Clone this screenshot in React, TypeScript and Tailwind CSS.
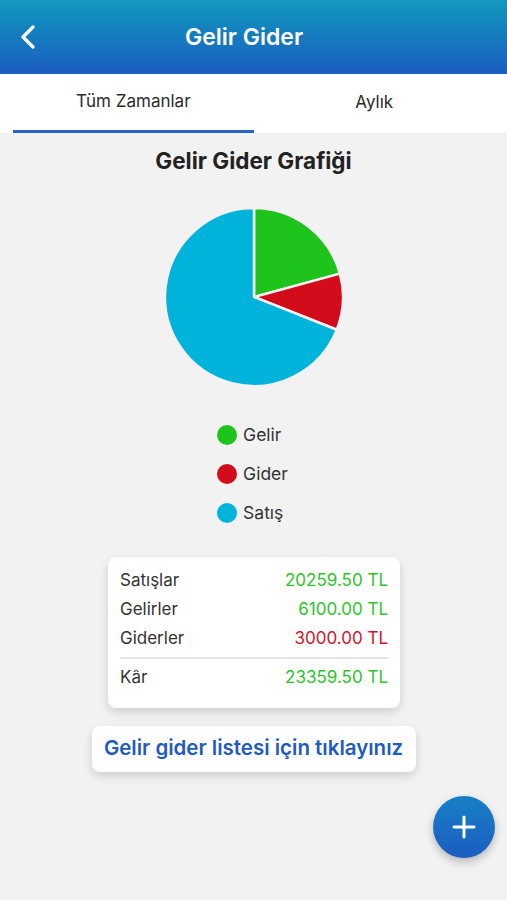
import React from "react";

function Pie() {
  const cx = 90, cy = 90, r = 89;
  const pt = (deg: number) => {
    const a = (deg * Math.PI) / 180;
    return [cx + r * Math.sin(a), cy - r * Math.cos(a)];
  };
  const total = 6100 + 3000 + 20259.5;
  const g = (6100 / total) * 360;
  const rd = g + (3000 / total) * 360;
  const slice = (a0: number, a1: number) => {
    const [x0, y0] = pt(a0);
    const [x1, y1] = pt(a1);
    const large = a1 - a0 > 180 ? 1 : 0;
    return `M${cx},${cy} L${x0},${y0} A${r},${r} 0 ${large} 1 ${x1},${y1} Z`;
  };
  return (
    <svg width="180" height="180" viewBox="0 0 180 180">
      <path d={slice(0, g)} fill="#1ec31b" stroke="#f2f2f2" strokeWidth="2.5" strokeLinejoin="round" />
      <path d={slice(g, rd)} fill="#d30c1c" stroke="#f2f2f2" strokeWidth="2.5" strokeLinejoin="round" />
      <path d={slice(rd, 360)} fill="#00b3da" stroke="#f2f2f2" strokeWidth="2.5" strokeLinejoin="round" />
    </svg>
  );
}

export default function App() {
  const font = { fontFamily: "Inter, 'Noto Sans', sans-serif" };
  return (
    <div className="relative w-[507px] h-[900px] bg-[#f2f2f2] overflow-hidden" style={font}>
      <div className="h-[74px] bg-gradient-to-b from-[#1398bd] to-[#1d5cc0] flex items-center relative">
        <svg className="absolute left-[19px] top-[25px]" width="18" height="24" viewBox="0 0 18 24">
          <path d="M14 2 L4 12 L14 22" fill="none" stroke="white" strokeWidth="3.2" strokeLinecap="round" strokeLinejoin="round" />
        </svg>
        <div className="w-full text-center text-white font-semibold text-[23px] pt-[1px] pr-[19px]">Gelir Gider</div>
      </div>
      <div className="h-[59px] bg-white flex relative">
        <div className="w-1/2 flex flex-col items-center">
          <div className="h-[57px] flex items-center text-[17px] text-[#2b2b2b] pl-[13px]">Tüm Zamanlar</div>
          <div className="h-[3px] w-[241px] ml-[13px] self-start bg-[#2a65c8]" />
        </div>
        <div className="w-1/2 h-[57px] flex items-center justify-center text-[17px] text-[#2b2b2b] pr-[12px]">Aylık</div>
      </div>
      <div className="flex flex-col items-center">
        <div className="mt-[11px] text-[22.5px] font-bold text-[#222]">Gelir Gider Grafiği</div>
        <div className="mt-[29px] ml-[1px]">
          <Pie />
        </div>
        <div className="mt-[38px] flex flex-col gap-[19px] pl-[2px] mr-[4px]">
          {[
            ["#1ec31b", "Gelir"],
            ["#d30c1c", "Gider"],
            ["#00b3da", "Satış"],
          ].map(([c, t]) => (
            <div key={t} className="flex items-center gap-[6px] h-[20px]">
              <div className="w-[20px] h-[20px] rounded-full" style={{ background: c }} />
              <span className="text-[17.5px] text-[#333]">{t}</span>
            </div>
          ))}
        </div>
        <div className="mt-[34px] w-[292px] bg-white rounded-[8px] shadow-[0_4px_10px_rgba(0,0,0,0.15)] px-[12px] pt-[9px] pb-[16px] text-[17px] ml-[1px]">
          <div className="flex justify-between h-[29px] items-center">
            <span className="text-[#333]">Satışlar</span>
            <span className="text-[#2ec52b]">20259.50 TL</span>
          </div>
          <div className="flex justify-between h-[29px] items-center">
            <span className="text-[#333]">Gelirler</span>
            <span className="text-[#2ec52b]">6100.00 TL</span>
          </div>
          <div className="flex justify-between h-[29px] items-center">
            <span className="text-[#333]">Giderler</span>
            <span className="text-[#d4142a]">3000.00 TL</span>
          </div>
          <div className="h-[2px] bg-[#e3e3e3] my-[4px]" />
          <div className="flex justify-between h-[29px] items-center">
            <span className="text-[#333]">Kâr</span>
            <span className="text-[#2ec52b]">23359.50 TL</span>
          </div>
        </div>
        <div className="mt-[18px] w-[324px] h-[46px] bg-white rounded-[8px] shadow-[0_4px_10px_rgba(0,0,0,0.15)] flex items-center justify-center text-[20.5px] font-semibold text-[#1f5bbf]">
          Gelir gider listesi için tıklayınız
        </div>
      </div>
      <div className="absolute left-[433px] top-[796px] w-[62px] h-[62px] rounded-full bg-gradient-to-b from-[#1680c6] to-[#1d5cc0] shadow-[0_4px_8px_rgba(0,0,0,0.25)] flex items-center justify-center">
        <svg width="24" height="24" viewBox="0 0 24 24">
          <path d="M12 2 V22 M2 12 H22" stroke="white" strokeWidth="3" strokeLinecap="round" />
        </svg>
      </div>
    </div>
  );
}
